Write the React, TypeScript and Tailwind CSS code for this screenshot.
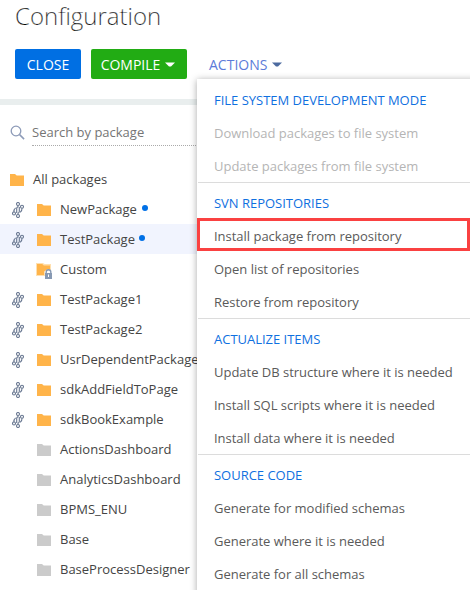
type IconProps = { className?: string };

function Caret({ className = '' }: IconProps) {
  return (
    <svg width="10" height="5" viewBox="0 0 10 5" className={className} fill="currentColor">
      <path d="M0 0.5h10L6 4.5H4z" />
    </svg>
  );
}

function Folder({ className = '' }: IconProps) {
  return (
    <svg width="14" height="12" viewBox="0 0 14 12" className={className} fill="currentColor">
      <path d="M0 0h5l1.7 1.5H14V12H0z" />
    </svg>
  );
}

function LockedFolder() {
  return (
    <svg width="17" height="16" viewBox="0 0 17 16">
      <path d="M0 0h7l1.6 1H15v6L9 8v5H0z" fill="#ffe0b0" />
      <path d="M1 1h5.2l1.6 1.5H14V6h-2.5L8 8.5V12H1z" fill="#ffb44a" />
      <path d="M10.2 10.2V9a2.3 2.3 0 0 1 4.6 0v1.2" fill="none" stroke="#8799b3" strokeWidth="1.4" />
      <path d="M9 10h7v6H9z" fill="#8799b3" />
      <path d="M12 11.5h1V14h-1z" fill="#fff" />
    </svg>
  );
}

function SvnIcon() {
  return (
    <svg width="13" height="16" viewBox="0 0 13 16" fill="none" stroke="#66758f" strokeWidth="1.1">
      <circle cx="6" cy="2" r="1.5" />
      <circle cx="10" cy="4.8" r="1.5" />
      <circle cx="2" cy="11.5" r="1.5" />
      <circle cx="6" cy="14" r="1.5" />
      <path d="M4.7 11V6.4Q4.7 5.3 6 4.8V3.5M7.3 5v4.6Q7.3 10.7 6 11.2v1.3" />
      <path d="M3.6 5.9C2.2 7 1.8 8.5 2 10M10 6.3c.1 1.8-.6 3.3-1.9 4.1" />
    </svg>
  );
}

type Pkg = { name: string; kind: 'svn' | 'locked' | 'plain'; changed?: boolean; selected?: boolean; width: string };

const packages: Pkg[] = [
  { name: 'NewPackage', kind: 'svn', changed: true, width: 'w-[77px]' },
  { name: 'TestPackage', kind: 'svn', changed: true, selected: true, width: 'w-[74px]' },
  { name: 'Custom', kind: 'locked', width: '' },
  { name: 'TestPackage1', kind: 'svn', width: '' },
  { name: 'TestPackage2', kind: 'svn', width: '' },
  { name: 'UsrDependentPackage', kind: 'svn', width: '' },
  { name: 'sdkAddFieldToPage', kind: 'svn', width: '' },
  { name: 'sdkBookExample', kind: 'svn', width: '' },
  { name: 'ActionsDashboard', kind: 'plain', width: '' },
  { name: 'AnalyticsDashboard', kind: 'plain', width: '' },
  { name: 'BPMS_ENU', kind: 'plain', width: '' },
  { name: 'Base', kind: 'plain', width: '' },
  { name: 'BaseProcessDesigner', kind: 'plain', width: '' },
];

const groups = [
  {
    title: 'FILE SYSTEM DEVELOPMENT MODE',
    disabled: true,
    items: ['Download packages to file system', 'Update packages from file system'],
  },
  {
    title: 'SVN REPOSITORIES',
    items: ['Install package from repository', 'Open list of repositories', 'Restore from repository'],
  },
  {
    title: 'ACTUALIZE ITEMS',
    items: [
      'Update DB structure where it is needed',
      'Install SQL scripts where it is needed',
      'Install data where it is needed',
    ],
  },
  {
    title: 'SOURCE CODE',
    items: ['Generate for modified schemas', 'Generate where it is needed', 'Generate for all schemas'],
  },
];

function PackageRow({ pkg }: { pkg: Pkg }) {
  return (
    <div className={`flex h-[30px] items-center pl-3 ${pkg.selected ? 'bg-[#f1f4fe]' : ''}`}>
      <div className="flex w-[25px] shrink-0 pt-0.5">{pkg.kind === 'svn' && <SvnIcon />}</div>
      <div className="flex w-[23px] shrink-0">
        {pkg.kind === 'locked' ? (
          <div className="-ml-px pt-[3px]">
            <LockedFolder />
          </div>
        ) : (
          <Folder className={pkg.kind === 'svn' ? 'mt-px text-[#ffb44a]' : 'mt-px text-[#cbcbcb]'} />
        )}
      </div>
      <span className={`whitespace-nowrap ${pkg.width}`}>{pkg.name}</span>
      {pkg.changed && <span className="mb-[3px] ml-[5px] size-[6px] rounded-full bg-[#0070e6]" />}
    </div>
  );
}

function ActionsMenu() {
  return (
    <div className="absolute top-[79px] left-[197px] h-[530px] w-[283px] bg-white tracking-[-0.015px] text-[#5a5a5a] shadow-[0_1px_7px_rgba(0,0,0,0.35)]">
      {groups.map((group, g) => (
        <div key={group.title} className={g === 0 ? 'pt-1' : 'ml-px border-t border-[#dcdcdc] pt-[3px]'}>
          <div className={`flex h-[33px] items-center text-[#0f70e0] ${g === 0 ? 'pl-[17px]' : 'pl-4'}`}>
            {group.title}
          </div>
          {group.items.map((item) => (
            <div
              key={item}
              className={`flex h-[33px] items-center whitespace-nowrap ${g === 0 ? 'pl-[17px]' : 'pl-4'} ${
                group.disabled ? 'text-[#b5b5b5]' : ''
              }`}
            >
              {item}
            </div>
          ))}
        </div>
      ))}
      <div className="absolute top-[139px] left-0 h-[33px] w-[273px] border-3 border-[#fa4141]" />
    </div>
  );
}

export default function App() {
  return (
    <div className="relative h-[590px] w-[470px] overflow-hidden bg-white text-[13px] leading-[18px] text-[#444]">
      <h1 className="h-[49px] pl-[15px] font-['Open_Sans',sans-serif] text-[24px] leading-[32px] font-light text-black [-webkit-text-stroke:0.25px_white]">
        Configuration
      </h1>
      <div className="font-['Open_Sans',sans-serif]">
        <div className="flex h-[30px] items-center text-sm">
          <button className="ml-[15px] h-[30px] w-[66px] rounded-[2px] bg-[#006fe3] pt-px text-white">CLOSE</button>
          <button className="ml-[10px] flex h-[30px] w-24 items-center justify-center gap-[5px] rounded-[2px] bg-[#22ac14] pt-px pr-0.5 text-white">
            COMPILE
            <Caret />
          </button>
          <button className="ml-[22px] flex h-[30px] items-center gap-[5px] pt-px text-[#5c7bd9]">
            ACTIONS
            <Caret className="text-[#4c6a9f]" />
          </button>
        </div>
        <div className="mt-5 h-[6px] bg-[#e9eeee]" />
        <div className="flex h-[59px] pt-[17px] pl-[10px]">
          <svg width="15" height="15" viewBox="0 0 15 15" className="mt-[3px]" fill="none" stroke="#8d9bb8">
            <circle cx="6" cy="6" r="4.8" strokeWidth="1.3" />
            <path d="M9.6 9.6l4.5 4.5" strokeWidth="1.5" />
          </svg>
          <div className="ml-[7px] h-6 w-[170px] border-b border-dotted border-[#aaa] pt-[1px] text-[#757575]">
            Search by package
          </div>
        </div>
        <div className="flex h-[30px] items-center pl-[10px]">
          <Folder className="mt-px text-[#ffb44a]" />
          <span className="ml-[9px]">All packages</span>
        </div>
        {packages.map((pkg) => (
          <PackageRow key={pkg.name} pkg={pkg} />
        ))}
        <ActionsMenu />
      </div>
    </div>
  );
}
